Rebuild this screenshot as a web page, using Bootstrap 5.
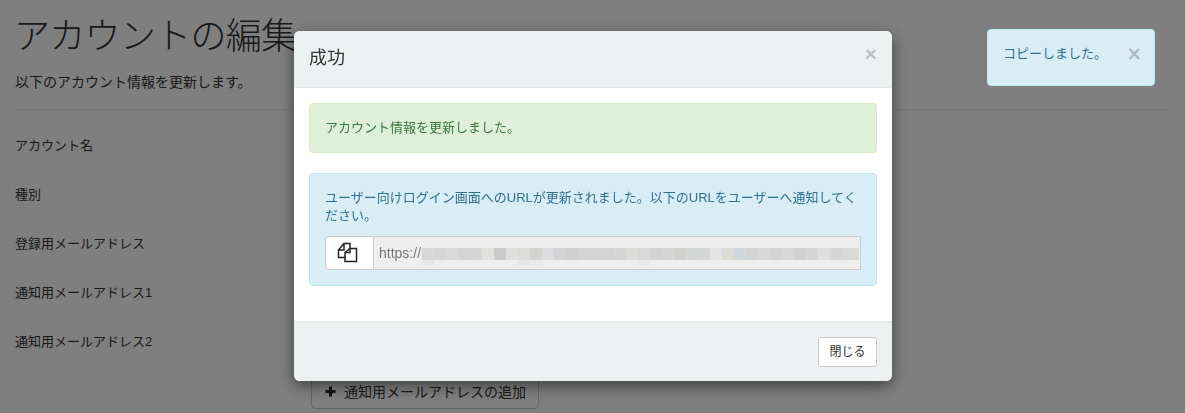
<!DOCTYPE html>
<html lang="ja">
<head>
<meta charset="utf-8">
<title>アカウントの編集</title>
<link rel="stylesheet" href="https://cdn.jsdelivr.net/npm/bootstrap@5.3.0/dist/css/bootstrap.min.css">
<style>
html,body{height:413px;overflow:hidden;background:#fff}
body{font-family:"Liberation Sans","Noto Sans CJK JP",sans-serif;font-size:14px;line-height:20px;color:#333}
.pg{padding:0 15px}
.pg-title{font-size:36px;line-height:40px;font-weight:300;letter-spacing:-.7px;margin:0 0 0 -1px;padding-top:17px;color:#333}
.pg-sub{margin:15px 0 0;color:#333}
.pg-rule{margin:17px 0 0;border-top:1px solid #eee;opacity:1}
.fld{height:49px;margin:0;font-size:13px}
.fld-first{margin-top:26px}
.add-wrap{padding:8px 0 0 296px;margin-top:-12px}
.add-btn{width:228px;height:32px;padding:0 0 3px 1px;border:1px solid #ccc;border-radius:4px;background:#fff;color:#333;font-size:14px}
.shade{position:fixed;inset:0;background:#000;opacity:.5;z-index:1040}
.dlg{position:fixed;left:294px;top:31px;width:598px;height:350px;z-index:1050;background:#fff;border-radius:6px;box-shadow:0 5px 15px rgba(0,0,0,.5);overflow:hidden}
.dlg-head{height:57px;background:#ecf0f1;border-bottom:1px solid #e5e5e5;padding:13px 15px 0}
.dlg-title{font-size:18px;line-height:25px;font-weight:400;margin:2px 0 0;color:#333}
.x-mark{font-family:"Liberation Sans",sans-serif;font-size:21px;font-weight:700;line-height:20px;color:#000;opacity:.2;text-shadow:0 1px 0 #fff;background:none;border:0;padding:0}
.dlg-body{height:233px;padding:15px;font-size:13px;line-height:18px}
.msg{border:1px solid;border-radius:4px;padding:15px;margin:0}
.msg-ok{height:50px;background:#dff0d8;border-color:#d6e9c6;color:#3c763d}
.msg-info{height:113px;margin-top:20px;background:#d9edf7;border-color:#bce8f1;color:#31708f}
.url-row{height:34px;margin-top:11px;font-size:14px}
.url-btn{width:49px;background:#fff;border:1px solid #ccc;border-radius:4px 0 0 4px}
.url-btn svg{margin:-1px 4px 0 0}
.url-box{flex:1;min-width:0;background:#eee;border:1px solid #ccc;border-left:0;color:#777;padding:0 1px 0 5px;line-height:32px;overflow:hidden}
.url-blur{width:437px;height:17px;margin:6px 0 0 auto;background:
 linear-gradient(90deg,#d8d8d8 0 12px,#d6d6d6 12px 24px,#dadada 24px 36px,#d6d4d4 36px 48px,#d4d6d8 48px 60px,#e2e1de 60px 72px,#c8cacc 72px 84px,#dedede 84px 96px,#dcdcd8 96px 108px,#d2d2cf 108px 120px,#dcdde0 120px 132px,#d4d4d4 132px 144px,#d0d0d0 144px 156px,#d4d4d4 156px 180px,#d4d3d2 180px 192px,#d4d6d6 192px 204px,#dcdcd9 204px 216px,#d8dadc 216px 228px,#d2d2d2 228px 240px,#d4d5d4 240px 252px,#d0d0cc 252px 264px,#d4d6d4 264px 276px,#d4d6d8 276px 288px,#e4e4e4 288px 300px,#dcdcd4 300px 312px,#d0d8dc 312px 324px,#d4d4d4 324px 336px,#d8d8d8 336px 348px,#d4d4d2 348px 360px,#d8d8d6 360px 372px,#d0d0d0 372px 384px,#d4d6d6 384px 396px,#dedede 396px 408px,#d6d6d4 408px 420px,#d8d8d8 420px 432px,#ddd8d2 432px 437px) top left/437px 12px no-repeat,
 linear-gradient(90deg,#e6e6e6 0 12px,#eee 12px 96px,#e4e4e4 96px 108px,#eaeaea 108px 120px,#eee 120px 216px,#e8e8e8 216px 228px,#eee 228px 437px) left 12px/437px 5px no-repeat}
.dlg-foot{height:60px;background:#ecf0f1;border-top:1px solid #e5e5e5;padding:15px}
.close-btn{width:59px;height:30px;padding:0;font-size:12px;line-height:18px;background:#fff;border:1px solid #ccc;border-radius:3px;color:#333}
.toast-box{position:fixed;left:987px;top:29px;width:168px;height:57px;z-index:1060;background:#d9edf7;border:1px solid #bce8f1;border-radius:4px;color:#31708f;padding:14px 15px;font-size:13px}
.toast-box .x-mark{font-size:23px;margin:0 -2px 0 0;height:20px}
</style>
</head>
<body>
<div class="pg">
  <h1 class="pg-title">アカウントの編集</h1>
  <p class="pg-sub">以下のアカウント情報を更新します。</p>
  <hr class="pg-rule">
  <p class="fld fld-first">アカウント名</p>
  <p class="fld">種別</p>
  <p class="fld">登録用メールアドレス</p>
  <p class="fld">通知用メールアドレス1</p>
  <p class="fld">通知用メールアドレス2</p>
  <div class="add-wrap"><button type="button" class="add-btn d-inline-flex align-items-center justify-content-center gap-2">
    <svg width="11" height="11" viewBox="0 0 11 11" aria-hidden="true"><path d="M4 0.5h3v3.500h3.500v3h-3.500v3.500h-3v-3.500h-3.500v-3h3.500z" fill="#222"/></svg>通知用メールアドレスの追加</button></div>
</div>
<div class="shade"></div>
<div class="dlg d-flex flex-column">
  <div class="dlg-head d-flex justify-content-between align-items-start">
    <h4 class="dlg-title">成功</h4>
    <button type="button" class="x-mark">×</button>
  </div>
  <div class="dlg-body">
    <div class="msg msg-ok">アカウント情報を更新しました。</div>
    <div class="msg msg-info">
      ユーザー向けログイン画面へのURLが更新されました。以下のURLをユーザーへ通知してください。
      <div class="url-row d-flex">
        <div class="url-btn d-flex align-items-center justify-content-center">
          <svg width="21" height="21" viewBox="0 0 21 21" fill="none" stroke="#222" stroke-width="1.500" aria-hidden="true"><path d="M8 15.500H1.500V8L7 1.500H13V6.500"/><path d="M7 1.500V8H1.500"/><path d="M8 19.500V10.500L13 6.500H19.500V19.500Z" fill="#fff"/><path d="M13 6.500V10.500H8"/></svg>
        </div>
        <div class="url-box d-flex align-items-center"><span>https://</span><span class="url-blur"></span></div>
      </div>
    </div>
  </div>
  <div class="dlg-foot d-flex justify-content-end"><button type="button" class="close-btn">閉じる</button></div>
</div>
<div class="toast-box d-flex justify-content-between">
  <span>コピーしました。</span><button type="button" class="x-mark">×</button>
</div>
</body>
</html>
